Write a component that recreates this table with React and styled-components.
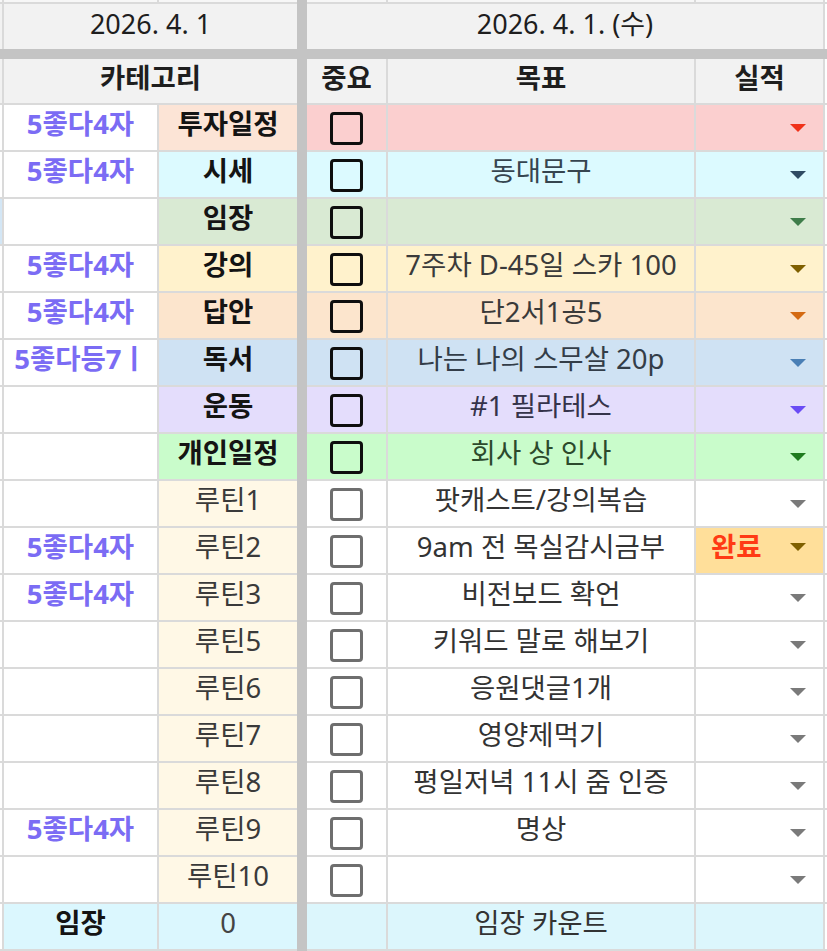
import React from "react";
import styled, { createGlobalStyle } from "styled-components";

// --------------------------------------------------

const GlobalStyle = createGlobalStyle`
	html, body {
		margin: 0;
		padding: 0;
		background: #ffffff;
	}

	body {
		font-family: "Noto Sans", "Noto Sans CJK KR", sans-serif;
	}
`;

const COLUMNS = "4px 155px 138px 10px 81px 308px 129px 2px";
const LINE = "#dadada";
const FROZEN = "#c4c4c4";

// --------------------------------------------------

const Sheet = styled.div`
	width: 827px;
	height: 951px;
	overflow: hidden;
	display: flex;
	flex-direction: column;
	background: #ffffff;
`;

const Row = styled.div`
	display: grid;
	grid-template-columns: ${COLUMNS};
	height: ${({ $h }) => $h}px;
	flex: none;
`;

const FrozenBar = styled.div`
	height: 10px;
	flex: none;
	background: ${FROZEN};
`;

const Cell = styled.div`
	box-sizing: border-box;
	display: flex;
	align-items: center;
	justify-content: ${({ $align }) => $align || "center"};
	grid-column: span ${({ $span }) => $span || 1};
	background: ${({ $bg }) => $bg || "#ffffff"};
	border-right: ${({ $noRight }) => ($noRight ? "none" : `2px solid ${LINE}`)};
	border-bottom: ${({ $noBottom }) => ($noBottom ? "none" : `2px solid ${LINE}`)};
	padding-bottom: ${({ $lift }) => ($lift ? 7 : 0)}px;
	overflow: hidden;
	white-space: nowrap;
	font-size: 27.5px;
	line-height: 1;
`;

const FrozenCol = styled.div`
	background: ${FROZEN};
`;

const DateText = styled.span`
	color: #1e1e1e;
	font-weight: 400;
	font-size: 27px;
`;

const HeadText = styled.span`
	color: #1e1e1e;
	font-weight: 700;
`;

const Note = styled.span`
	color: #7b6cf4;
	font-weight: 700;
`;

const Category = styled.span`
	color: ${({ $bold }) => ($bold ? "#141414" : "#3a3a3a")};
	font-weight: ${({ $bold }) => ($bold ? 700 : 400)};
`;

const Goal = styled.span`
	color: ${({ $color }) => $color || "#333333"};
	font-weight: 400;
`;

const Done = styled.span`
	color: #ff3a14;
	font-weight: 700;
	margin-left: 15px;
`;

const Checkbox = styled.span`
	box-sizing: border-box;
	width: 33px;
	height: 33px;
	margin-top: 2px;
	border: ${({ $strong }) => ($strong ? 3.5 : 3)}px solid ${({ $strong }) => ($strong ? "#0e0e0e" : "#6e6e6e")};
	border-radius: 4px;
`;

const Caret = styled.span`
	width: 0;
	height: 0;
	margin-left: auto;
	margin-right: 17px;
	border-left: 8px solid transparent;
	border-right: 8px solid transparent;
	border-top: 8px solid ${({ $color }) => $color};
`;

// --------------------------------------------------

const ROUTINE_BG = "#fff8e6";
const ROUTINE_CARET = "#7a7a7a";

const rows = [
	{ note: "5좋다4자", cat: "투자일정", bold: true, catBg: "#fce4d6", bg: "#fbcfcf", caret: "#f0321a" },
	{ note: "5좋다4자", cat: "시세", bold: true, bg: "#dcfaff", goal: "동대문구", goalColor: "#36454f", caret: "#2f4b63" },
	{ cat: "임장", bold: true, bg: "#d9ead3", caret: "#3f7d4a", edge: "#d3e6f5" },
	{ note: "5좋다4자", cat: "강의", bold: true, bg: "#fff2cc", goal: "7주차 D-45일 스카 100", goalColor: "#3a3a3a", caret: "#7f6000" },
	{ note: "5좋다4자", cat: "답안", bold: true, bg: "#fce5cd", goal: "단2서1공5", goalColor: "#3a3a3a", caret: "#d46a12" },
	{ note: "5좋다등7ㅣ", cat: "독서", bold: true, bg: "#cfe2f3", goal: "나는 나의 스무살 20p", goalColor: "#333d48", caret: "#4a7fb5" },
	{ cat: "운동", bold: true, bg: "#e4ddfc", goal: "#1 필라테스", goalColor: "#35334a", caret: "#6a4cf5" },
	{ cat: "개인일정", bold: true, bg: "#c9fccb", goal: "회사 상 인사", goalColor: "#2c4a2c", caret: "#1e7b1e" },
	{ cat: "루틴1", goal: "팟캐스트/강의복습" },
	{ note: "5좋다4자", cat: "루틴2", goal: "9am 전 목실감시금부", done: "완료", doneBg: "#ffdf9a", caret: "#7f6000" },
	{ note: "5좋다4자", cat: "루틴3", goal: "비전보드 확언" },
	{ cat: "루틴5", goal: "키워드 말로 해보기" },
	{ cat: "루틴6", goal: "응원댓글1개" },
	{ cat: "루틴7", goal: "영양제먹기" },
	{ cat: "루틴8", goal: "평일저녁 11시 줌 인증" },
	{ note: "5좋다4자", cat: "루틴9", goal: "명상" },
	{ cat: "루틴10" },
];

// --------------------------------------------------

const DataRow = ({ note, cat, bold, catBg, bg, goal, goalColor, caret, edge, done, doneBg }) =>
	<Row $h={47}>
		<Cell $bg={edge} />
		<Cell $lift>{note && <Note>{note}</Note>}</Cell>
		<Cell $bg={catBg || (bold ? bg : ROUTINE_BG)} $noRight $lift>
			<Category $bold={bold}>{cat}</Category>
		</Cell>
		<FrozenCol />
		<Cell $bg={bg}>
			<Checkbox $strong={bold} />
		</Cell>
		<Cell $bg={bg} $lift>
			{goal && <Goal $color={goalColor}>{goal}</Goal>}
		</Cell>
		<Cell $bg={doneBg || bg} $align="flex-start" $lift={!!done}>
			{done && <Done>{done}</Done>}
			<Caret $color={caret || ROUTINE_CARET} />
		</Cell>
		<Cell $noRight />
	</Row>;

// --------------------------------------------------

const App = () =>
	<>
		<GlobalStyle />
		<Sheet>
			<Row $h={4}>
				<Cell $bg="#f7f7f7" />
				<Cell $bg="#f7f7f7" />
				<Cell $bg="#f7f7f7" $noRight />
				<FrozenCol />
				<Cell $bg="#f7f7f7" />
				<Cell $bg="#f7f7f7" />
				<Cell $bg="#f7f7f7" />
				<Cell $noRight />
			</Row>

			<Row $h={45}>
				<Cell $bg="#f2f2f2" $noBottom />
				<Cell $span={2} $bg="#f2f2f2" $noRight $noBottom $lift>
					<DateText>2026. 4. 1</DateText>
				</Cell>
				<FrozenCol />
				<Cell $span={3} $bg="#f2f2f2" $noBottom $lift>
					<DateText>2026. 4. 1. (수)</DateText>
				</Cell>
				<Cell $noRight $noBottom />
			</Row>

			<FrozenBar />

			<Row $h={46}>
				<Cell $bg="#f2f2f2" />
				<Cell $span={2} $bg="#f2f2f2" $noRight $lift>
					<HeadText>카테고리</HeadText>
				</Cell>
				<FrozenCol />
				<Cell $bg="#f2f2f2" $lift><HeadText>중요</HeadText></Cell>
				<Cell $bg="#f2f2f2" $lift><HeadText>목표</HeadText></Cell>
				<Cell $bg="#f2f2f2" $lift><HeadText>실적</HeadText></Cell>
				<Cell $noRight />
			</Row>

			{rows.map((row, i) =>
				<DataRow key={i + "-" + row.cat} {...row} />,
			)}

			<Row $h={47}>
				<Cell />
				<Cell $bg="#dbf7fe" $lift><Category $bold>임장</Category></Cell>
				<Cell $bg="#dbf7fe" $noRight $lift><Goal $color="#444444">0</Goal></Cell>
				<FrozenCol />
				<Cell $bg="#dcf6fc" />
				<Cell $bg="#dcf6fc" $lift><Goal>임장 카운트</Goal></Cell>
				<Cell $bg="#dcf6fc" />
				<Cell $noRight />
			</Row>
		</Sheet>
	</>;

export default App;
